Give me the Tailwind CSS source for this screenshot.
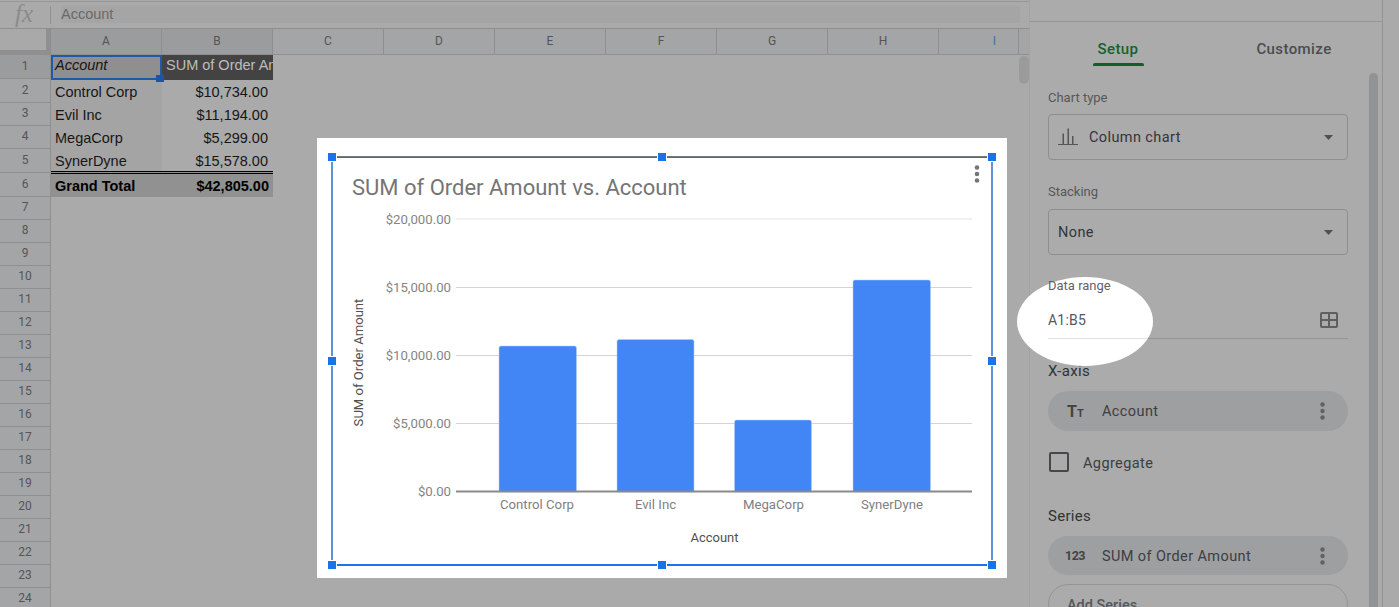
<!DOCTYPE html>
<html>
<head>
    <meta charset="utf-8">
    <script src="https://cdn.jsdelivr.net/npm/@tailwindcss/browser@4"></script>
</head>
<body class="bg-[#aaaaaa] overflow-hidden font-['Roboto',sans-serif]">
<div class="relative flex w-[1399px] h-[607px] overflow-hidden">

    <!-- sheet -->
    <div class="w-[1029px] shrink-0 flex flex-col">
        <!-- formula bar -->
        <div class="h-[28px] shrink-0 flex items-start border-t border-t-[#979797] border-b border-b-[#8f8f8f] mt-px">
            <div class="w-[50px] h-[24px] flex items-center justify-center pr-[2px] font-['Liberation_Serif',serif] italic text-[25px] text-[#8b8b8b]">fx</div>
            <div class="w-px h-[18px] mt-[4px] bg-[#8f8f8f]"></div>
            <div class="ml-[10px] mt-[4px] w-[959px] h-[17px] bg-[#a5a5a5] text-[14.500px] leading-[17px] text-[#6a6a6a] font-['Liberation_Sans',sans-serif]">Account</div>
        </div>
        <!-- column letters -->
        <div class="h-[26px] shrink-0 flex bg-[#a4a5a7] border-b border-[#8f8f8f] text-[12px] text-[#555555] text-center leading-[25px]">
            <div class="w-[51px] bg-[#aaaaaa] border-r-[5px] border-r-[#8f8f8f]">
                <div class="h-[21px] bg-[#a9a9a9] border-b-[4px] border-[#8f8f8f] box-content"></div>
            </div>
            <div class="w-[111px] bg-[#9b9c9e] border-r border-[#8f8f8f]">A</div>
            <div class="w-[111px] bg-[#9b9c9e] border-r border-[#8f8f8f]">B</div>
            <div class="w-[111px] border-r border-[#8f8f8f]">C</div>
            <div class="w-[111px] border-r border-[#8f8f8f]">D</div>
            <div class="w-[111px] border-r border-[#8f8f8f]">E</div>
            <div class="w-[111px] border-r border-[#8f8f8f]">F</div>
            <div class="w-[111px] border-r border-[#8f8f8f]">G</div>
            <div class="w-[111px] border-r border-[#8f8f8f]">H</div>
            <div class="w-[80px] border-r border-[#8f8f8f] pl-[32px] text-[#3f6f9f]">I</div>
            <div class="flex-1"></div>
        </div>
        <!-- rows and cells -->
        <div class="flex-1 flex">
            <div class="w-[51px] shrink-0 flex flex-col bg-[#a4a5a7] border-r border-[#8f8f8f] text-[12px] text-[#555555] text-center">
                <div class="h-[24px] leading-[22px] bg-[#9b9c9e] border-b border-[#8f8f8f]">1</div>
                <div class="h-[24px] leading-[22px] border-b border-[#8f8f8f]">2</div>
                <div class="h-[23px] leading-[20px] border-b border-[#8f8f8f]">3</div>
                <div class="h-[23px] leading-[21px] border-b border-[#8f8f8f]">4</div>
                <div class="h-[24px] leading-[22px] border-b border-[#8f8f8f]">5</div>
                <div class="h-[24px] leading-[22px] border-b border-[#8f8f8f]">6</div>
                <div class="h-[23px] leading-[21px] border-b border-[#8f8f8f]">7</div>
                <div class="h-[23px] leading-[21px] border-b border-[#8f8f8f]">8</div>
                <div class="h-[23px] leading-[21px] border-b border-[#8f8f8f]">9</div>
                <div class="h-[23px] leading-[21px] border-b border-[#8f8f8f]">10</div>
                <div class="h-[23px] leading-[21px] border-b border-[#8f8f8f]">11</div>
                <div class="h-[23px] leading-[21px] border-b border-[#8f8f8f]">12</div>
                <div class="h-[23px] leading-[21px] border-b border-[#8f8f8f]">13</div>
                <div class="h-[23px] leading-[21px] border-b border-[#8f8f8f]">14</div>
                <div class="h-[23px] leading-[21px] border-b border-[#8f8f8f]">15</div>
                <div class="h-[23px] leading-[21px] border-b border-[#8f8f8f]">16</div>
                <div class="h-[23px] leading-[21px] border-b border-[#8f8f8f]">17</div>
                <div class="h-[23px] leading-[21px] border-b border-[#8f8f8f]">18</div>
                <div class="h-[23px] leading-[21px] border-b border-[#8f8f8f]">19</div>
                <div class="h-[23px] leading-[21px] border-b border-[#8f8f8f]">20</div>
                <div class="h-[23px] leading-[21px] border-b border-[#8f8f8f]">21</div>
                <div class="h-[23px] leading-[21px] border-b border-[#8f8f8f]">22</div>
                <div class="h-[23px] leading-[21px] border-b border-[#8f8f8f]">23</div>
                <div class="h-[23px] leading-[21px] border-b border-[#8f8f8f]">24</div>
            </div>
            <div class="w-[222px] shrink-0 flex flex-col font-['Liberation_Sans',sans-serif] text-[14.500px] text-[#161616]">
                <div class="h-[25px] flex">
                    <div class="relative w-[111px] bg-[#8f8f8f] border-2 border-[#1f5aa8] pl-[2px] leading-[17px] italic">Account
                        <div class="absolute right-[-4px] bottom-[-4px] w-[8px] h-[7px] bg-[#1a55a6]"></div>
                    </div>
                    <div class="w-[111px] bg-[#434343] text-[#bdbdbd] pl-[4px] pt-[2px] leading-[17px] overflow-hidden whitespace-nowrap">SUM of Order Amount</div>
                </div>
                <div class="h-[23px] flex leading-[25px]"><div class="w-[111px] bg-[#a4a4a4] pl-[4px]">Control Corp</div><div class="w-[111px] pr-[5px] text-right">$10,734.00</div></div>
                <div class="h-[23px] flex leading-[25px]"><div class="w-[111px] bg-[#a4a4a4] pl-[4px]">Evil Inc</div><div class="w-[111px] pr-[5px] text-right">$11,194.00</div></div>
                <div class="h-[23px] flex leading-[25px]"><div class="w-[111px] bg-[#a4a4a4] pl-[4px]">MegaCorp</div><div class="w-[111px] pr-[5px] text-right">$5,299.00</div></div>
                <div class="h-[22px] flex leading-[25px]"><div class="w-[111px] bg-[#a4a4a4] pl-[4px]">SynerDyne</div><div class="w-[111px] pr-[5px] text-right">$15,578.00</div></div>
                <div class="h-[26px] w-[222px] flex font-bold bg-[#919191] border-t-[3px] border-double border-[#000000] leading-[24px] text-black"><div class="w-[111px] pl-[4px]">Grand Total</div><div class="w-[111px] pr-[4px] text-right">$42,805.00</div></div>
            </div>
        </div>
    </div>

    <!-- grid scrollbar thumb -->
    <div class="absolute left-[1019px] top-[56px] w-[10px] h-[28px] rounded-[5px] bg-[#9a9b9d]"></div>

    <!-- side panel -->
    <div class="relative w-[354px] shrink-0 border-l border-[#a3a3a3] border-r border-r-[#949494] bg-[#ababab] pl-[18px] pr-[34px]">
        <div class="absolute left-0 top-[21px] w-full h-px bg-[#959595]"></div>
        <div class="absolute left-[339px] top-[73px] w-[9px] h-[540px] rounded-t-[5px] bg-[#929396]"></div>

        <div class="h-[66px] pt-[40px] flex text-[15px] leading-[19px] font-medium tracking-[0.4px]">
            <div class="relative w-[140px] text-center text-[#16622f]">Setup
                <div class="absolute left-[45px] top-[23px] w-[51px] h-[2.500px] rounded-t-[2px] bg-[#0f5e2b]"></div>
            </div>
            <div class="w-[160px] text-center pl-[52px] whitespace-nowrap text-[#4a4d50]">Customize</div>
        </div>

        <div class="mt-[25px] h-[14px] text-[13px] leading-[14px] text-[#55585b]">Chart type</div>
        <div class="mt-[9px] h-[46px] flex items-center border border-[#8e8e8e] rounded-[4px] pl-[9px] pr-[14px] text-[14.500px] text-[#333537]">
            <svg class="w-[20px] h-[20px]" viewBox="0 0 20 20" fill="#555555"><path d="M0 17h20v1H0zM4.500 6.500h1.500V17H4.500zM9.500 1.500H11V17H9.500zM14 9h1.500v8H14z"/></svg>
            <span class="ml-[11px] pt-[2px] flex-1 tracking-[0.4px]">Column chart</span>
            <svg class="w-[9px] h-[5px]" viewBox="0 0 10 5" preserveAspectRatio="none" fill="#505052"><path d="M0 0h10L5 5z"/></svg>
        </div>

        <div class="mt-[25px] h-[14px] text-[13px] leading-[14px] text-[#55585b]">Stacking</div>
        <div class="mt-[10px] h-[46px] flex items-center border border-[#8e8e8e] rounded-[4px] pl-[9px] pr-[14px] text-[14.500px] text-[#333537]">
            <span class="flex-1 pt-[2px] tracking-[0.4px]">None</span>
            <svg class="w-[9px] h-[5px]" viewBox="0 0 10 5" preserveAspectRatio="none" fill="#505052"><path d="M0 0h10L5 5z"/></svg>
        </div>

        <!-- spotlight on data range -->
        <div class="relative mt-[24px] h-[60px] border-b border-[#959595]">
            <div class="absolute left-[-31px] top-[-2px] w-[136px] h-[89px] rounded-[50%] bg-white"></div>
            <div class="absolute left-0 bottom-[-1px] w-[100px] h-px bg-[#e0e0e0]"></div>
            <div class="relative h-[14px] text-[13px] leading-[14px] text-[#5f6368]">Data range</div>
            <div class="relative mt-[19px] flex items-center text-[14px] leading-[16px] text-[#55585b]">
                <span class="flex-1 tracking-[0.2px]">A1:B5</span>
                <svg class="w-[18px] h-[16px] mr-[10px]" viewBox="0 0 18 16" fill="none" stroke="#5f5f5f" stroke-width="2"><rect x="1" y="1" width="16" height="14" rx="1"/><path d="M1 8h16M9 1v14"/></svg>
            </div>
        </div>

        <div class="mt-[23px] h-[18px] text-[15px] leading-[18px] text-[#303235] tracking-[0.3px]">X-axis</div>
        <div class="mt-[11px] h-[40px] flex items-center rounded-[20px] bg-[#9e9fa1] text-[14.500px] text-[#3c3e41]">
            <span class="w-[54px] pl-[19px] pt-[2px] font-bold text-[16px] leading-none text-[#444444]">T<span class="text-[11px]">T</span></span>
            <span class="flex-1 pt-[2px] tracking-[0.4px]">Account</span>
            <svg class="w-[5px] h-[18px] mr-[23px]" viewBox="0 0 5 18" fill="#626262"><circle cx="2.500" cy="2.500" r="2.200"/><circle cx="2.500" cy="9" r="2.200"/><circle cx="2.500" cy="15.500" r="2.200"/></svg>
        </div>

        <div class="mt-[21px] h-[20px] flex items-center text-[14.500px] text-[#3c3e41]">
            <div class="ml-px w-[20px] h-[20px] border-2 border-[#45474a] rounded-[2px]"></div>
            <span class="ml-[14px] pt-[4px] tracking-[0.4px]">Aggregate</span>
        </div>

        <div class="mt-[35px] h-[18px] text-[15px] leading-[18px] text-[#303235] tracking-[0.3px]">Series</div>
        <div class="mt-[11px] h-[39px] flex items-center rounded-[20px] bg-[#9e9fa1] text-[14.500px] text-[#3c3e41]">
            <span class="w-[54px] pl-[17px] pt-[2px] font-bold text-[12.500px] leading-none text-[#444444] tracking-[-0.5px]">123</span>
            <span class="flex-1 pt-[2px] tracking-[0.4px]">SUM of Order Amount</span>
            <svg class="w-[5px] h-[18px] mr-[23px]" viewBox="0 0 5 18" fill="#626262"><circle cx="2.500" cy="2.500" r="2.200"/><circle cx="2.500" cy="9" r="2.200"/><circle cx="2.500" cy="15.500" r="2.200"/></svg>
        </div>
        <div class="mt-[9px] h-[40px] rounded-[20px] border border-[#959595] pl-[18px] pt-[12px] text-[14.500px] leading-[18px] font-medium text-[#55585b]">Add Series</div>
    </div>

    <!-- chart over the sheet -->
    <div class="absolute left-[317px] top-[138px] w-[690px] h-[440px] bg-white">
        <svg class="w-[690px] h-[440px] block" viewBox="317 138 690 440" font-family="Roboto, sans-serif">
            <text x="352" y="195" font-size="22" fill="#757575">SUM of Order Amount vs. Account</text>

            <g stroke="#d4d4d4">
                <path d="M456 219h516" stroke="#e2e2e2" stroke-width="1.200"/>
                <path d="M456 287.500h516M456 355.500h516M456 423.500h516"/>
            </g>
            <g font-size="13.200" fill="#858585" text-anchor="end">
                <text x="451" y="224">$20,000.00</text>
                <text x="451" y="292">$15,000.00</text>
                <text x="451" y="360">$10,000.00</text>
                <text x="451" y="428">$5,000.00</text>
                <text x="451" y="496">$0.00</text>
            </g>

            <g fill="#4285f4" stroke="#b5cefb" stroke-width="0.500">
                <path d="M499 492v-144a2 2 0 0 1 2-2h73.500a2 2 0 0 1 2 2v144z"/>
                <path d="M617 492v-150.500a2 2 0 0 1 2-2h73a2 2 0 0 1 2 2v150.500z"/>
                <path d="M734.500 492v-70a2 2 0 0 1 2-2h73a2 2 0 0 1 2 2v70z"/>
                <path d="M853 492v-210a2 2 0 0 1 2-2h73.500a2 2 0 0 1 2 2v210z"/>
            </g>
            <path d="M456 491.500h516" stroke="#8a8a8a" stroke-width="2"/>

            <g font-size="13.200" fill="#808080" text-anchor="middle">
                <text x="537" y="509">Control Corp</text>
                <text x="655.500" y="509">Evil Inc</text>
                <text x="773.500" y="509">MegaCorp</text>
                <text x="892" y="509">SynerDyne</text>
            </g>
            <text x="714.500" y="541.500" font-size="13" fill="#505050" text-anchor="middle">Account</text>
            <text transform="translate(363 362.500) rotate(-90)" font-size="13.100" fill="#505050" text-anchor="middle">SUM of Order Amount</text>

            <g fill="#757575"><circle cx="977" cy="167.500" r="2.300"/><circle cx="977" cy="174" r="2.300"/><circle cx="977" cy="180.500" r="2.300"/></g>

            <!-- selection frame -->
            <path d="M337 156.500h320M667 156.500h320" stroke="#77797c" stroke-width="1"/>
            <path d="M337 157.500h320M667 157.500h320" stroke="#1a73e8" stroke-width="1"/>
            <path d="M332 162v194M332 366v194M992 162v194M992 366v194" stroke="#2a6fd0" stroke-width="1.500"/>
            <path d="M337 565h320M667 565h320" stroke="#1a73e8" stroke-width="2"/>
            <g fill="#1a73e8">
                <rect x="328" y="153" width="8" height="8"/><rect x="658" y="153" width="8" height="8"/><rect x="988" y="153" width="8" height="8"/>
                <rect x="328" y="357" width="8" height="8"/><rect x="988" y="357" width="8" height="8"/>
                <rect x="328" y="561" width="8" height="8"/><rect x="658" y="561" width="8" height="8"/><rect x="988" y="561" width="8" height="8"/>
            </g>
        </svg>
    </div>
</div>
</body>
</html>
